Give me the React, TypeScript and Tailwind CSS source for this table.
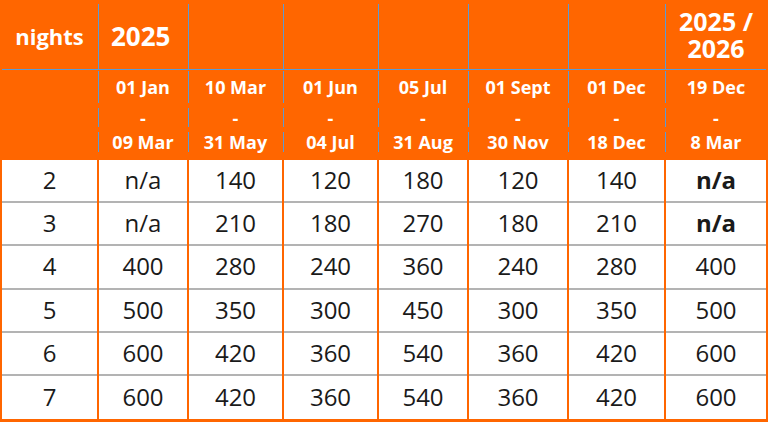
const GRID =
  "grid grid-cols-[95px_88px_93px_93px_88px_98px_95px_100px] gap-x-[2px] px-[2px]";

const DATES = [
  ["01 Jan", "09 Mar"],
  ["10 Mar", "31 May"],
  ["01 Jun", "04 Jul"],
  ["05 Jul", "31 Aug"],
  ["01 Sept", "30 Nov"],
  ["01 Dec", "18 Dec"],
  ["19 Dec", "8 Mar"],
];

const ROWS = [
  ["2", "n/a", "140", "120", "180", "120", "140", "n/a"],
  ["3", "n/a", "210", "180", "270", "180", "210", "n/a"],
  ["4", "400", "280", "240", "360", "240", "280", "400"],
  ["5", "500", "350", "300", "450", "300", "350", "500"],
  ["6", "600", "420", "360", "540", "360", "420", "600"],
  ["7", "600", "420", "360", "540", "360", "420", "600"],
];

function SubRow({ height, values }: { height: string; values: string[] }) {
  return (
    <div className={`${GRID} ${height}`}>
      <div />
      {values.map((v, i) => (
        <div
          key={i}
          className="-ml-px flex items-center justify-center border-l border-[#5b9bd5] text-[18px] font-bold leading-none"
        >
          {v}
        </div>
      ))}
    </div>
  );
}

export default function App() {
  return (
    <div className="flex h-[422px] w-[768px] flex-col bg-[#ff6600] font-['Open_Sans',sans-serif] text-white">
      {/* season header */}
      <div className={`${GRID} h-[69px] pt-[4px]`}>
        <div className="flex items-center justify-center text-[22px] font-bold">nights</div>
        <div className="-ml-px flex items-center border-l border-[#5b9bd5] pl-[12px] text-[26px] font-bold">
          2025
        </div>
        <div className="-ml-px border-l border-[#5b9bd5]" />
        <div className="-ml-px border-l border-[#5b9bd5]" />
        <div className="-ml-px border-l border-[#5b9bd5]" />
        <div className="-ml-px border-l border-[#5b9bd5]" />
        <div className="-ml-px border-l border-[#5b9bd5]" />
        <div className="-ml-px flex flex-col items-center justify-center border-l border-[#5b9bd5] pb-[3px] text-[25px] font-bold leading-[27px]">
          <span>2025 /</span>
          <span>2026</span>
        </div>
      </div>
      <div className="mx-[2px] h-px bg-[#5b9bd5]" />

      {/* date ranges */}
      <div className="flex flex-col pt-px">
        <SubRow height="h-[34px] pb-[2px]" values={DATES.map((d) => d[0])} />
        <div className="h-[3px]" />
        <SubRow height="h-[20px] pb-px" values={DATES.map(() => "-")} />
        <div className="h-[4px]" />
        <SubRow height="h-[25px] pb-[5px]" values={DATES.map((d) => d[1])} />
        <div className="h-[3px]" />
      </div>

      {/* prices */}
      <div className="flex h-[259px] flex-col">
        {ROWS.map((row, r) => (
          <div key={r} className={`${GRID} flex-1`}>
            {row.map((v, c) => (
              <div
                key={c}
                className={`flex items-center justify-center bg-white pb-px text-[24px] text-[#1a1a1a] ${
                  r < ROWS.length - 1 ? "border-b-2 border-[#b3b3b3]" : ""
                } ${c === 7 && v === "n/a" ? "font-bold" : ""}`}
              >
                {v}
              </div>
            ))}
          </div>
        ))}
      </div>
    </div>
  );
}
